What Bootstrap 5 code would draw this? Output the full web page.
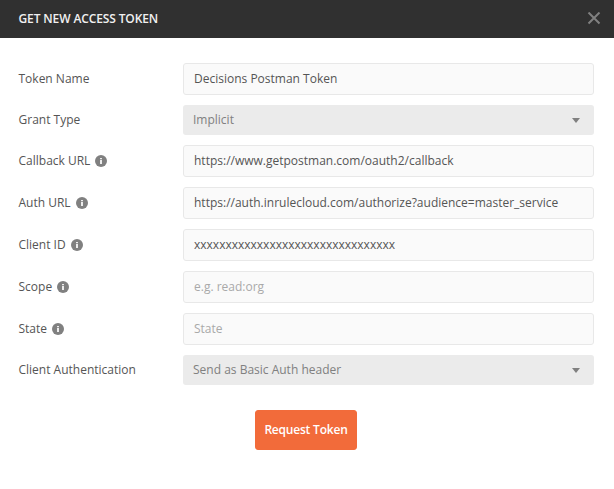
<!DOCTYPE html>
<html lang="en">
<head>
<meta charset="utf-8">
<meta name="viewport" content="width=device-width, initial-scale=1">
<title>Get New Access Token</title>
<link href="https://cdn.jsdelivr.net/npm/bootstrap@5.3.0/dist/css/bootstrap.min.css" rel="stylesheet">
<style>
body { font-family: "Open Sans", sans-serif; font-size: 12px; line-height: 18px; color: #555; background: #fff; }
.token-header { height: 38px; padding: 0 13px 0 18.5px; background: #303030; }
.token-title { font-size: 12px; line-height: 18px; font-weight: 600; color: #f0f0f0; letter-spacing: -.12px; }
.token-close { line-height: 0; color: #808080; }
.token-form { padding: 25px 20px 0 18.5px; gap: 10px; }
.token-label { width: 164.5px; gap: 5px; }
.form-control, .form-select { font-size: 12px; line-height: 18px; border-radius: 3px; }
.form-control { height: 32px; padding: 5px 10px 7px; color: #555; background-color: #fafafa; border-color: #e8e8e8; }
.form-control::placeholder { color: #a9a9a9; }
.form-select { height: 30px; padding: 6px 30px 6px 10px; border: 0; color: #808080; background-color: #ebebeb;
  background-image: url("data:image/svg+xml,%3Csvg xmlns='http://www.w3.org/2000/svg' viewBox='0 0 8 5'%3E%3Cpath fill='%23808080' d='M0 0h8L4 5z'/%3E%3C/svg%3E");
  background-size: 8px 5px; background-position: right 14px top 13px; }
.btn-token { width: 102px; height: 40px; margin: 15px 0 0 236.5px; font-size: 12px; font-weight: 600; line-height: 18px; letter-spacing: -.2px; border-radius: 3px;
  --bs-btn-color: #fff; --bs-btn-bg: #f26b3a; --bs-btn-border-color: #f26b3a; --bs-btn-hover-color: #fff; --bs-btn-hover-bg: #e05c2c; --bs-btn-hover-border-color: #e05c2c; }
</style>
</head>
<body>
<svg class="d-none" xmlns="http://www.w3.org/2000/svg">
  <symbol id="info" viewBox="0 0 12 12"><circle cx="6" cy="6" r="6" fill="#808080"/><path d="M5 3h2v1.2H5zM5 5h2v4H5z" fill="#fff" fill-opacity=".85"/></symbol>
</svg>
<header class="token-header d-flex align-items-center justify-content-between">
  <h1 class="token-title mb-0">GET NEW ACCESS TOKEN</h1>
  <button type="button" class="token-close btn p-0 border-0" aria-label="Close">
    <svg width="14" height="14" viewBox="0 0 14 14" fill="none" stroke="#808080" stroke-width="2"><path d="M1.5 .5l11 11M12.5 .5l-11 11"/></svg>
  </button>
</header>
<form class="token-form d-flex flex-column">
  <div class="d-flex align-items-center">
    <label class="token-label flex-shrink-0" for="name">Token Name</label>
    <input id="name" class="form-control" value="Decisions Postman Token">
  </div>
  <div class="d-flex align-items-center">
    <label class="token-label flex-shrink-0" for="grant">Grant Type</label>
    <select id="grant" class="form-select"><option>Implicit</option></select>
  </div>
  <div class="d-flex align-items-center">
    <label class="token-label flex-shrink-0 d-flex align-items-center" for="callback">Callback URL<svg width="12" height="12"><use href="#info"/></svg></label>
    <input id="callback" class="form-control" value="https://www.getpostman.com/oauth2/callback">
  </div>
  <div class="d-flex align-items-center">
    <label class="token-label flex-shrink-0 d-flex align-items-center" for="auth">Auth URL<svg width="12" height="12"><use href="#info"/></svg></label>
    <input id="auth" class="form-control" value="https://auth.inrulecloud.com/authorize?audience=master_service">
  </div>
  <div class="d-flex align-items-center">
    <label class="token-label flex-shrink-0 d-flex align-items-center" for="client">Client ID<svg width="12" height="12"><use href="#info"/></svg></label>
    <input id="client" class="form-control" value="xxxxxxxxxxxxxxxxxxxxxxxxxxxxxxxx">
  </div>
  <div class="d-flex align-items-center">
    <label class="token-label flex-shrink-0 d-flex align-items-center" for="scope">Scope<svg width="12" height="12"><use href="#info"/></svg></label>
    <input id="scope" class="form-control" placeholder="e.g. read:org">
  </div>
  <div class="d-flex align-items-center">
    <label class="token-label flex-shrink-0 d-flex align-items-center" for="state">State<svg width="12" height="12"><use href="#info"/></svg></label>
    <input id="state" class="form-control" placeholder="State">
  </div>
  <div class="d-flex align-items-center">
    <label class="token-label flex-shrink-0" for="method">Client Authentication</label>
    <select id="method" class="form-select"><option>Send as Basic Auth header</option></select>
  </div>
  <button type="button" class="btn btn-token p-0">Request Token</button>
</form>
<script src="https://cdn.jsdelivr.net/npm/bootstrap@5.3.0/dist/js/bootstrap.bundle.min.js"></script>
</body>
</html>
